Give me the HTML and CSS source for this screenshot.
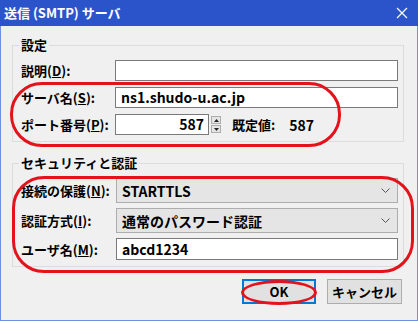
FILE: index.html
```html
<!DOCTYPE html>
<html lang="ja">
<head>
<meta charset="utf-8">
<link rel="stylesheet" href="styles.css">
</head>
<body>
<div class="window">
  <div class="titlebar">
    <span class="title">送信 (SMTP) サーバ</span>
    <svg class="close" width="12" height="12" viewBox="0 0 12 12"><path d="M1 1L11 11M11 1L1 11" stroke="#fff" stroke-width="1.2" fill="none"/></svg>
  </div>
  <div class="body">
    <fieldset class="group g1">
      <legend>設定</legend>
      <div class="row">
        <span class="label">説明(<u>D</u>):</span>
        <div class="input"></div>
      </div>
      <div class="row">
        <span class="label">サーバ名(<u>S</u>):</span>
        <div class="input">ns1.shudo-u.ac.jp</div>
      </div>
      <div class="row">
        <span class="label">ポート番号(<u>P</u>):</span>
        <div class="port">
          <div class="input num">587</div>
          <div class="spin">
            <span class="sb"><svg width="5" height="3" viewBox="0 0 5 3"><path d="M0 3L2.5 0L5 3Z" fill="#222"/></svg></span>
            <span class="sb"><svg width="5" height="3" viewBox="0 0 5 3"><path d="M0 0L2.5 3L5 0Z" fill="#222"/></svg></span>
          </div>
          <span class="default">既定値:</span>
          <span class="defval">587</span>
        </div>
      </div>
      <div class="mark mark1"></div>
    </fieldset>

    <fieldset class="group g2">
      <legend>セキュリティと認証</legend>
      <div class="row">
        <span class="label">接続の保護(<u>N</u>):</span>
        <div class="select">STARTTLS<svg class="chev" width="9" height="5" viewBox="0 0 9 5"><path d="M0.5 0.5L4.5 4.5L8.5 0.5" stroke="#555" fill="none"/></svg></div>
      </div>
      <div class="row">
        <span class="label">認証方式(<u>I</u>):</span>
        <div class="select">通常のパスワード認証<svg class="chev" width="9" height="5" viewBox="0 0 9 5"><path d="M0.5 0.5L4.5 4.5L8.5 0.5" stroke="#555" fill="none"/></svg></div>
      </div>
      <div class="row">
        <span class="label">ユーザ名(<u>M</u>):</span>
        <div class="input user">abcd1234</div>
      </div>
      <div class="mark mark2"></div>
    </fieldset>

    <div class="buttons">
      <button class="btn ok">OK<span class="mark mark3"></span></button>
      <button class="btn">キャンセル</button>
    </div>
  </div>
</div>
</body>
</html>
```

FILE: styles.css
```css
* { box-sizing: border-box; }
html, body { margin: 0; padding: 0; }
body {
  width: 418px;
  height: 321px;
  overflow: hidden;
  font-family: "Noto Sans CJK JP", "Noto Sans", sans-serif;
  font-weight: 700;
  font-size: 13px;
  color: #000;
}
.window {
  width: 418px;
  height: 321px;
  background: #f0f0f0;
  border: 1px solid #6f8fe3;
  border-top: 0;
  display: flex;
  flex-direction: column;
}
.titlebar {
  height: 26px;
  background: #2b54cb;
  margin: 0 -1px;
  display: flex;
  align-items: center;
  justify-content: space-between;
  padding: 0 10px 0 4px;
  flex: none;
}
.title {
  color: #fff;
  font-size: 13px;
  line-height: 16px;
}
.close { display: block; }
.body {
  flex: 1;
  display: flex;
  flex-direction: column;
}
.group {
  position: relative;
  margin: 0 13px 0 11px;
  border: 1px solid #dcdcdc;
  padding: 7px 5px 6px 8px;
  display: flex;
  flex-direction: column;
  gap: 6px;
  min-width: 0;
}
.group legend {
  padding: 0 2px;
  margin-left: -2px;
  line-height: 16px;
  font-size: 13px;
}
.g1 { margin-top: 11px; }
.g2 { margin-top: 13px; gap: 5px; }
.row {
  display: flex;
  align-items: center;
}
.label {
  white-space: nowrap;
}
.g1 .label { width: 94px; flex: none; }
.g2 .label { width: 95px; flex: none; }
.input {
  flex: 1;
  height: 21px;
  background: #fff;
  border: 1px solid #7a7a7a;
  padding: 0 5px;
  line-height: 19px;
  font-size: 14px;
}
.port {
  flex: 1;
  display: flex;
  align-items: center;
}
.input.num {
  flex: none;
  width: 94px;
  text-align: right;
  padding-right: 4px;
}
.spin {
  display: flex;
  flex-direction: column;
  gap: 1px;
  margin-left: 2px;
}
.sb {
  width: 10px;
  height: 8px;
  border: 1px solid #adadad;
  background: #e5e5e5;
  display: flex;
  align-items: center;
  justify-content: center;
}
.sb svg { display: block; }
.default { margin-left: 11px; }
.defval { margin-left: 14px; font-size: 14px; }
.select {
  flex: 1;
  height: 25px;
  background: #e5e5e5;
  border: 1px solid #adadad;
  padding: 0 7px 0 5px;
  display: flex;
  align-items: center;
  justify-content: space-between;
  font-size: 14px;
}
.input.user { height: 22px; line-height: 20px; }
.buttons {
  display: flex;
  justify-content: flex-end;
  gap: 11px;
  margin: 12px 15px 0 0;
}
.btn {
  position: relative;
  font-family: inherit;
  font-weight: 700;
  font-size: 13px;
  height: 25px;
  width: 75px;
  background: #e1e1e1;
  border: 1px solid #adadad;
  color: #000;
  padding: 0;
}
.btn.ok {
  width: 74px;
  border: 2px solid #0078d7;
}
.mark {
  position: absolute;
  border: 3px solid #e3121b;
  pointer-events: none;
}
.mark1 {
  left: -3px;
  top: 29px;
  width: 331px;
  height: 65px;
  border-radius: 32px;
}
.mark2 {
  left: -1px;
  top: 5px;
  width: 402px;
  height: 97px;
  border-radius: 32px;
}
.mark3 {
  left: -3px;
  top: -1px;
  width: 76px;
  height: 25px;
  border-radius: 50%;
}
```
